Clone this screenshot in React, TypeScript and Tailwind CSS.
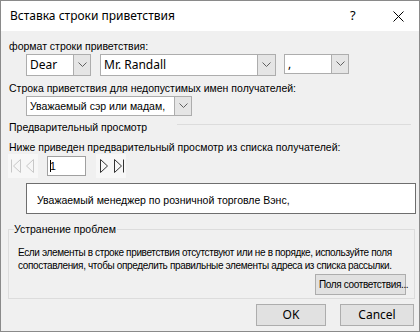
import React from "react";

const LABEL = "font-['Liberation_Sans',Arial,sans-serif] text-[10.5px] leading-[13px] text-black";
const UI = "font-['Noto_Sans','Open_Sans',sans-serif] text-[12px] text-black";

function Chevron() {
  return (
    <svg width="9" height="6" viewBox="0 0 9 6" fill="none">
      <path d="M0.5 0.5 L4.5 4.5 L8.5 0.5" stroke="#606060" strokeWidth="1" />
    </svg>
  );
}

function Combo({ value, w, h, arrowW, text }: { value: string; w: string; h: string; arrowW: string; text: string }) {
  return (
    <div className={`flex ${w} ${h} border border-[#adadad] bg-white`}>
      <div className={`flex-1 flex items-center pl-[3px] overflow-hidden whitespace-nowrap ${text}`}>{value}</div>
      <div className={`${arrowW} flex items-center justify-center bg-[#e5e5e5] border-l border-[#adadad]`}>
        <Chevron />
      </div>
    </div>
  );
}

function NavIcon({ kind, color }: { kind: "first" | "prev" | "next" | "last"; color: string }) {
  const w = kind === "first" || kind === "last" ? 10 : 8;
  return (
    <svg width={w} height="14" viewBox={`0 0 ${w} 14`} fill="none" stroke={color} strokeWidth="1">
      {kind === "first" && (
        <>
          <path d="M0.5 0.5 V13.5" />
          <path d="M9.5 0.5 L2.5 7 L9.5 13.5 Z" />
        </>
      )}
      {kind === "prev" && <path d="M7.5 0.5 L0.5 7 L7.5 13.5 Z" />}
      {kind === "next" && <path d="M0.5 0.5 L7.5 7 L0.5 13.5 Z" />}
      {kind === "last" && (
        <>
          <path d="M0.5 0.5 L7.5 7 L0.5 13.5 Z" />
          <path d="M9.5 0.5 V13.5" />
        </>
      )}
    </svg>
  );
}

export default function App() {
  return (
    <div className="w-[420px] h-[332px] border border-[#8a8a8a] flex flex-col bg-[#f0f0f0] overflow-hidden">
      {/* Title bar */}
      <div className="h-[30px] bg-white flex items-center shrink-0">
        <span className={`${UI} pl-[9px] flex-1`}>Вставка строки приветствия</span>
        <span className={`${UI} text-[13px] w-[12px] mr-[31px]`}>?</span>
        <svg width="11" height="11" viewBox="0 0 11 11" className="mr-[15px]">
          <path d="M0.5 0.5 L10.5 10.5 M10.5 0.5 L0.5 10.5" stroke="#000" strokeWidth="1" />
        </svg>
      </div>

      <div className="flex-1 flex flex-col pl-[7px] pr-[5px]">
        <div className={`${LABEL} mt-[9px] pl-[1px]`}>формат строки приветствия:</div>

        <div className="flex items-start mt-[1px] pl-[18px]">
          <Combo value="Dear" w="w-[65px]" h="h-[22px]" arrowW="w-[17px]" text={UI} />
          <div className="ml-[9px]">
            <Combo value="Mr. Randall" w="w-[176px]" h="h-[22px]" arrowW="w-[18px]" text={UI} />
          </div>
          <div className="ml-[8px]">
            <Combo value="," w="w-[65px]" h="h-[20px]" arrowW="w-[17px]" text={UI} />
          </div>
        </div>

        <div className={`${LABEL} mt-[6px] pl-[1px]`}>Строка приветствия для недопустимых имен получателей:</div>
        <div className="mt-[1px] pl-[18px]">
          <Combo value="Уважаемый сэр или мадам," w="w-[166px]" h="h-[20px]" arrowW="w-[17px]" text={LABEL} />
        </div>

        <div className="flex items-start mt-[5px] h-[13px]">
          <span className={`${LABEL} pl-[1px]`}>Предварительный просмотр</span>
          <div className="ml-[30px] flex-1 h-px bg-[#dcdcdc] mt-[3px] mr-[3px]" />
        </div>

        <div className={`${LABEL} leading-[12px] mt-[7px] pl-[1px]`}>
          Ниже приведен предварительный просмотр из списка получателей:
        </div>

        <div className="flex items-center h-[24px]">
          <div className="w-[30px] h-[24px] bg-[#f7f7f7] flex items-center pl-[3px] gap-[5px]">
            <NavIcon kind="first" color="#c8c8c8" />
            <NavIcon kind="prev" color="#c8c8c8" />
          </div>
          <div className="ml-[9px] w-[39px] h-[20px] border border-[#a0a0a0] bg-white flex items-center pl-[2px]">
            <span className="w-px h-[12px] bg-black" />
            <span className={`${LABEL} -ml-[1px]`}>1</span>
          </div>
          <div className="ml-[10px] w-[30px] h-[24px] bg-[#f7f7f7] flex items-center pl-[4px] gap-[6px]">
            <NavIcon kind="next" color="#333" />
            <NavIcon kind="last" color="#333" />
          </div>
        </div>

        <div className="ml-[18px] mt-[5px] w-[390px] h-[31px] border border-[#6e6e6e] bg-white flex items-center pl-[10px] pt-[3px]">
          <span className={LABEL}>Уважаемый менеджер по розничной торговле Вэнс,</span>
        </div>

        {/* Troubleshooting group */}
        <div className="relative mt-[15px] w-[407px] h-[70px] border border-[#dcdcdc] pl-[9px] pr-[4px] pt-[16px]">
          <span className={`${LABEL} absolute -top-[7px] left-[5px] bg-[#f0f0f0] pr-[1px]`}>Устранение проблем</span>
          <div className={`${LABEL} text-[10px] leading-[12px] whitespace-nowrap tracking-[-0.35px]`}>
            Если элементы в строке приветствия отсутствуют или не в порядке, используйте поля
            <br />
            сопоставления, чтобы определить правильные элементы адреса из списка рассылки.
          </div>
          <div className="flex justify-end mt-[2px] pr-[4px]">
            <button className={`${LABEL} text-[10px] tracking-[-0.35px] whitespace-nowrap w-[91px] h-[21px] bg-[#e1e1e1] border border-[#adadad] flex items-center justify-start pl-[3px]`}>
              Поля соответствия...
            </button>
          </div>
        </div>

        <div className="flex justify-end mt-[5px]">
          <button className={`${UI} w-[70px] h-[22px] bg-[#e1e1e1] border border-[#adadad]`}>OK</button>
          <button className={`${UI} ml-[14px] w-[74px] h-[22px] bg-[#e1e1e1] border border-[#adadad]`}>Cancel</button>
        </div>
      </div>
    </div>
  );
}
